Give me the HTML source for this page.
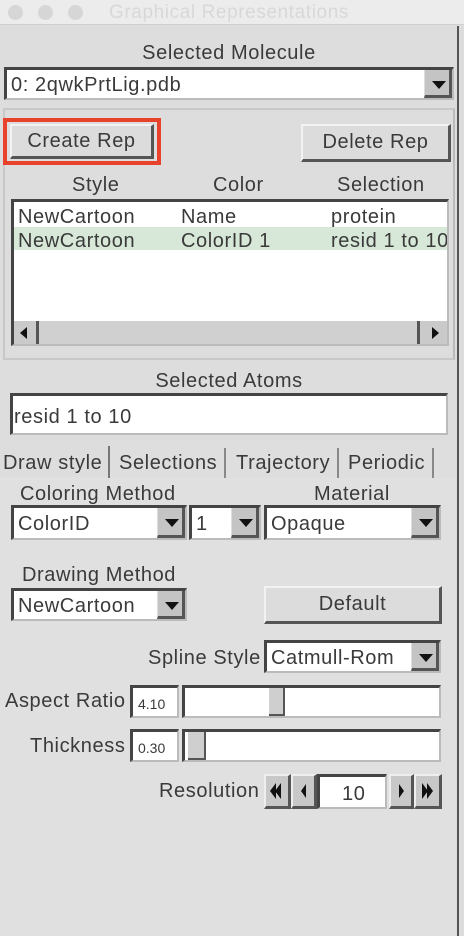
<!DOCTYPE html>
<html><head><meta charset="utf-8"><style>
*{box-sizing:border-box;margin:0;padding:0}
body{width:464px;height:936px;background:#dddddd;font-family:"Liberation Sans",sans-serif;color:#3a3a3a;position:relative;overflow:hidden;font-size:20px;letter-spacing:0.6px}
.a{position:absolute}
.t{position:absolute;white-space:nowrap;line-height:1}
.sunk{position:absolute;background:#fff;border-top:3px solid #444;border-left:3px solid #444;border-bottom:2px solid #bbb;border-right:2px solid #bbb}
.btn{position:absolute;background:#dcdcdc;border-top:2px solid #f2f2f2;border-left:2px solid #f2f2f2;border-bottom:3px solid #555;border-right:3px solid #555;text-align:center}
.arr{position:absolute;top:0;bottom:0;right:0;width:28px;background:#c4c4c4;border-bottom:3px solid #555;border-right:3px solid #555;border-left:1px solid #ddd}
.arr:after{content:"";position:absolute;left:7px;top:11px;border-left:7px solid transparent;border-right:7px solid transparent;border-top:8px solid #111}
.dt{position:absolute;left:4px;top:6px;line-height:1}
.sb{position:absolute;background:#c8c8c8;border-top:2px solid #eee;border-left:2px solid #eee;border-bottom:3px solid #555;border-right:3px solid #555}
.sb svg{position:absolute;left:0;top:0}
</style></head><body>
<div class="a" style="left:0;top:0;width:464px;height:25px;background:#ececec;border-bottom:1px solid #d0d0d0"></div>
<div class="a" style="left:8px;top:5px;width:15px;height:15px;border-radius:50%;background:#d6d6d6"></div>
<div class="a" style="left:38px;top:5px;width:15px;height:15px;border-radius:50%;background:#d6d6d6"></div>
<div class="a" style="left:68px;top:5px;width:15px;height:15px;border-radius:50%;background:#d6d6d6"></div>
<div class="t" style="left:109px;top:3px;font-size:19px;color:#d8d8d8">Graphical Representations</div>
<div class="a" style="left:457px;top:26px;width:2px;height:910px;background:#555"></div>

<div class="t" style="left:0;width:458px;text-align:center;top:43px">Selected Molecule</div>
<div class="sunk" style="left:4px;top:67px;width:450px;height:33px"><div class="dt" style="left:4px;top:5px">0: 2qwkPrtLig.pdb</div><div class="arr"></div></div>

<div class="a" style="left:3px;top:108px;width:452px;height:252px;border:2px solid #c8c8c8;border-right-color:#bbb"></div>
<div class="a" style="left:3px;top:118px;width:158px;height:47px;border:4px solid #e8412c"></div>
<div class="btn" style="left:10px;top:124px;width:144px;height:35px;line-height:30px">Create Rep</div>
<div class="btn" style="left:301px;top:124px;width:150px;height:38px;line-height:33px">Delete Rep</div>
<div class="t" style="left:72px;top:175px">Style</div>
<div class="t" style="left:213px;top:175px">Color</div>
<div class="t" style="left:337px;top:175px">Selection</div>
<div class="sunk" style="left:11px;top:199px;width:438px;height:147px;overflow:hidden">
 <div class="a" style="left:0;top:25px;width:433px;height:23px;background:#d8e8d8"></div>
 <div class="t" style="left:4px;top:5px">NewCartoon</div><div class="t" style="left:167px;top:5px">Name</div><div class="t" style="left:317px;top:5px">protein</div>
 <div class="t" style="left:4px;top:29px">NewCartoon</div><div class="t" style="left:167px;top:29px">ColorID 1</div><div class="t" style="left:317px;top:29px">resid 1 to 10</div>
 <div class="a" style="left:0;top:119px;width:433px;height:24px;background:#cacaca"></div>
 <div class="a" style="left:22px;top:119px;width:384px;height:24px;background:#d0d0d0;border-left:3px solid #555;border-right:3px solid #555"></div>
 <div class="a" style="left:6px;top:125px;border-top:6px solid transparent;border-bottom:6px solid transparent;border-right:7px solid #111"></div>
 <div class="a" style="left:418px;top:125px;border-top:6px solid transparent;border-bottom:6px solid transparent;border-left:7px solid #111"></div>
</div>

<div class="t" style="left:0;width:458px;text-align:center;top:371px">Selected Atoms</div>
<div class="sunk" style="left:10px;top:393px;width:438px;height:42px"><div class="dt" style="left:1px;top:11px">resid 1 to 10</div></div>

<div class="a" style="left:0;top:477px;width:456px;height:459px;background:#e0e0e0"></div>
<div class="a" style="left:110px;top:446px;width:346px;height:32px;background:#dedede"></div>
<div class="t" style="left:3px;top:453px">Draw style</div>
<div class="a" style="left:108px;top:446px;width:2px;height:32px;background:#777"></div>
<div class="t" style="left:119px;top:453px">Selections</div>
<div class="a" style="left:224px;top:448px;width:2px;height:30px;background:#888"></div>
<div class="t" style="left:236px;top:453px">Trajectory</div>
<div class="a" style="left:337px;top:448px;width:2px;height:30px;background:#888"></div>
<div class="t" style="left:348px;top:453px">Periodic</div>
<div class="a" style="left:432px;top:448px;width:2px;height:30px;background:#888"></div>

<div class="t" style="left:20px;top:484px">Coloring Method</div>
<div class="t" style="left:314px;top:484px">Material</div>
<div class="sunk" style="left:11px;top:505px;width:176px;height:35px"><div class="dt">ColorID</div><div class="arr"></div></div>
<div class="sunk" style="left:189px;top:505px;width:72px;height:35px"><div class="dt">1</div><div class="arr"></div></div>
<div class="sunk" style="left:264px;top:505px;width:177px;height:35px"><div class="dt">Opaque</div><div class="arr"></div></div>

<div class="t" style="left:22px;top:565px">Drawing Method</div>
<div class="sunk" style="left:11px;top:588px;width:176px;height:33px"><div class="dt" style="top:5px">NewCartoon</div><div class="arr"></div></div>
<div class="btn" style="left:264px;top:586px;width:178px;height:38px;line-height:33px">Default</div>

<div class="t" style="left:148px;top:648px">Spline Style</div>
<div class="sunk" style="left:264px;top:640px;width:177px;height:33px"><div class="dt" style="top:5px">Catmull-Rom</div><div class="arr"></div></div>

<div class="t" style="left:5px;top:691px">Aspect Ratio</div>
<div class="sunk" style="left:130px;top:685px;width:49px;height:33px"><div class="dt" style="left:5px;top:9px;font-size:14px;letter-spacing:0">4.10</div></div>
<div class="sunk" style="left:182px;top:685px;width:259px;height:33px"><div class="a" style="left:84px;top:0;width:16px;height:28px;background:#cfcfcf;border-right:2px solid #555;border-bottom:2px solid #555"></div></div>

<div class="t" style="left:30px;top:736px">Thickness</div>
<div class="sunk" style="left:130px;top:729px;width:49px;height:33px"><div class="dt" style="left:5px;top:9px;font-size:14px;letter-spacing:0">0.30</div></div>
<div class="sunk" style="left:182px;top:729px;width:259px;height:33px"><div class="a" style="left:3px;top:0;width:18px;height:28px;background:#cfcfcf;border-right:2px solid #555;border-bottom:2px solid #555"></div></div>

<div class="t" style="left:159px;top:781px">Resolution</div>
<div class="sb" style="left:264px;top:774px;width:27px;height:35px"><svg width="22" height="30"><path d="M4 15 L10 7 L10 23 Z M9 15 L15 7 L15 23 Z" fill="#111"/></svg></div>
<div class="sb" style="left:291px;top:774px;width:26px;height:35px"><svg width="21" height="30"><path d="M8 15 L13 8 L13 22 Z" fill="#111"/></svg></div>
<div class="sunk" style="left:317px;top:774px;width:70px;height:35px"><div class="dt" style="left:22px;top:7px">10</div></div>
<div class="sb" style="left:389px;top:774px;width:25px;height:35px"><svg width="20" height="30"><path d="M8 8 L13 15 L8 22 Z" fill="#111"/></svg></div>
<div class="sb" style="left:414px;top:774px;width:28px;height:35px"><svg width="23" height="30"><path d="M6 7 L12 15 L6 23 Z M11 7 L17 15 L11 23 Z" fill="#111"/></svg></div>
</body></html>
